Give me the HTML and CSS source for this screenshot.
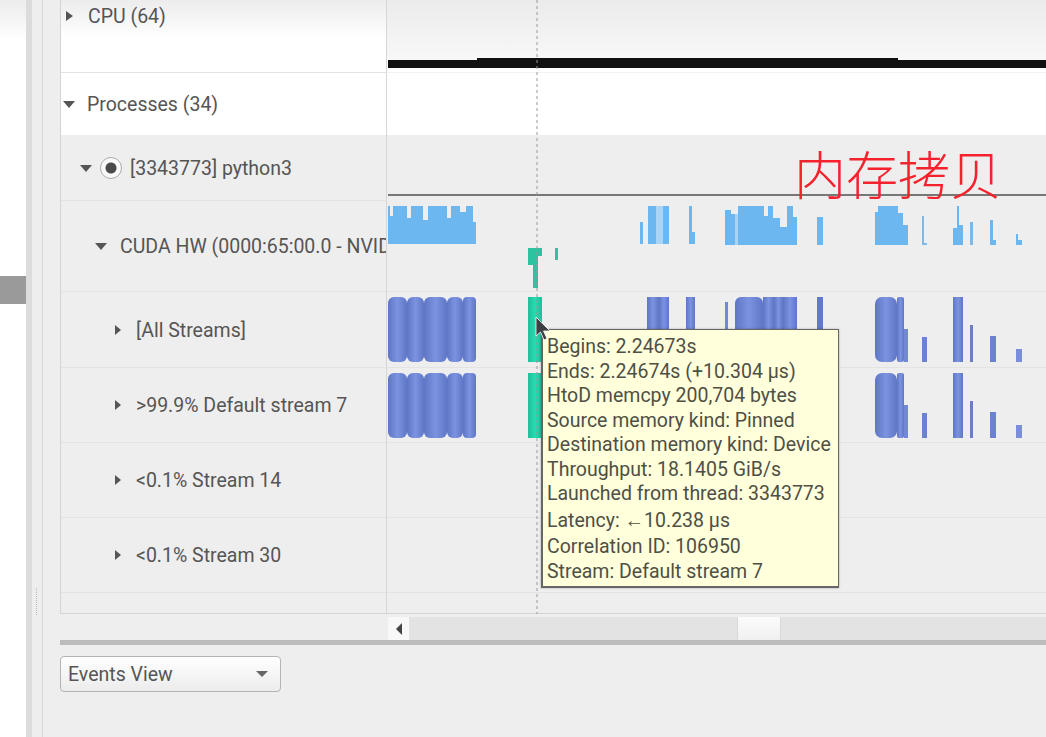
FILE: index.html
```html
<!DOCTYPE html>
<html lang="en">
<head>
    <meta charset="UTF-8">
    <meta name="viewport" content="width=device-width, initial-scale=1.0">
    <title>Timeline View</title>
    <link rel="stylesheet" href="styles.css">
</head>
<body>
    <div class="rail"><div class="rail-handle"></div></div>
    <div class="gutter"><div class="grip"></div></div>

    <div class="main">
        <div class="tree">
            <div class="row row-cpu">
                <div class="label level-0"><span class="caret-right"></span>CPU (64)</div>
                <div class="lane"></div>
            </div>
            <div class="row row-processes">
                <div class="label level-0"><span class="caret-down"></span>Processes (34)</div>
                <div class="lane"></div>
            </div>
            <div class="row row-process">
                <div class="label level-1"><span class="caret-down"></span><span class="radio"></span>[3343773] python3</div>
                <div class="lane lane-process"></div>
            </div>
            <div class="row row-device">
                <div class="label level-2"><span class="caret-down"></span>CUDA HW (0000:65:00.0 - NVIDIA A100)</div>
                <div class="lane"></div>
            </div>
            <div class="row row-stream-first">
                <div class="label level-3"><span class="caret-right"></span>[All Streams]</div>
                <div class="lane"></div>
            </div>
            <div class="row row-stream">
                <div class="label level-3"><span class="caret-right"></span>&gt;99.9% Default stream 7</div>
                <div class="lane"></div>
            </div>
            <div class="row row-stream">
                <div class="label level-3"><span class="caret-right"></span>&lt;0.1% Stream 14</div>
                <div class="lane"></div>
            </div>
            <div class="row row-stream">
                <div class="label level-3"><span class="caret-right"></span>&lt;0.1% Stream 30</div>
                <div class="lane"></div>
            </div>
            <div class="row row-end">
                <div class="label"></div>
                <div class="lane"></div>
            </div>

            <!-- timeline drawing, viewBox uses page coordinates -->
            <svg class="chart" viewBox="387 0 659 614" width="659" height="614">
                <defs>
                    <linearGradient id="capsule">
                        <stop offset="0" stop-color="#5f76c6"/>
                        <stop offset="0.5" stop-color="#7c93e0"/>
                        <stop offset="1" stop-color="#5f76c6"/>
                    </linearGradient>
                    <linearGradient id="teal">
                        <stop offset="0" stop-color="#22bd9b"/>
                        <stop offset="0.5" stop-color="#24dcb0"/>
                        <stop offset="1" stop-color="#22bd9b"/>
                    </linearGradient>
                    <g id="stream-bars" fill="url(#capsule)">
                        <rect x="388" y="297" width="19" height="65" rx="6"/>
                        <rect x="407" y="297" width="17" height="65" rx="6"/>
                        <rect x="424" y="297" width="23" height="65" rx="6"/>
                        <rect x="447" y="297" width="16" height="65" rx="6"/>
                        <rect x="463" y="297" width="13" height="65" rx="4"/>
                        <rect x="528" y="297" width="14" height="65" fill="url(#teal)"/>
                        <rect x="647" y="297" width="12" height="65"/>
                        <rect x="659" y="297" width="10" height="65"/>
                        <rect x="686" y="297" width="9" height="65"/>
                        <rect x="725" y="302" width="3" height="60" fill="#7188d4"/>
                        <rect x="735" y="297" width="28" height="65" rx="6"/>
                        <rect x="763" y="297" width="11" height="65"/>
                        <rect x="774" y="297" width="9" height="65"/>
                        <rect x="783" y="297" width="14" height="65"/>
                        <rect x="817" y="297" width="6" height="65" fill="#6179c8"/>
                        <rect x="875" y="297" width="22" height="65" rx="7"/>
                        <rect x="897" y="297" width="7" height="65" rx="2"/>
                        <rect x="904" y="329" width="4" height="33" fill="#7188d4"/>
                        <rect x="922" y="337" width="5" height="25" fill="#6b82d0"/>
                        <rect x="953" y="297" width="10" height="65"/>
                        <rect x="970" y="325" width="3" height="37" fill="#6b7fc0"/>
                        <rect x="990" y="336" width="6" height="26" fill="#6b82d0"/>
                        <rect x="1016" y="349" width="6" height="13" fill="#7a8fd8"/>
                    </g>
                </defs>

                <path class="cpu-load" d="M388 60H477V58H898V60H1046V68H388Z"/>

                <path class="hw-load" d="M388 244V206H390V216H393V206H407V218H411V206H423V220H428V206H447V218H451V206H460V212H466V206H473V222H476V244Z"/>
                <path class="hw-load" d="M640 244V222H643V244ZM648 244V206H656V244ZM663 244V206H669V244Z"/>
                <rect class="hw-pale" x="656" y="206" width="7" height="38"/>
                <path class="hw-load" d="M689 244V206H692V232H695V244Z"/>
                <path class="hw-load" d="M725 245V210H731V214H735V245ZM738 245V206H764V216H768V206H773V218H780V227H787V206H793V217H797V245Z"/>
                <rect class="hw-pale" x="735" y="214" width="3" height="31"/>
                <path class="hw-load" d="M817 245V217H823V245Z"/>
                <path class="hw-load" d="M875 245V212H878V206H898V213H903V225H908V245Z"/>
                <path class="hw-thin" d="M922 245V216H924V243H927V245Z"/>
                <path class="hw-load" d="M953 245V228H957V206H959V225H963V245Z"/>
                <path class="hw-thin" d="M970 245V222H973V245Z"/>
                <path class="hw-load" d="M990 245V220H993V240H996V245Z"/>
                <path class="hw-load" d="M1016 245V234H1018V240H1022V245Z"/>

                <path class="memcpy" d="M528 248H542V256H538V288H533V265H528Z"/>
                <rect class="memcpy" x="555" y="248" width="3" height="12"/>

                <use href="#stream-bars"/>
                <use href="#stream-bars" y="76"/>

                <line class="cursor-line" x1="537" y1="0" x2="537" y2="614"/>
            </svg>

            <div class="note">内存拷贝</div>
        </div>

        <div class="hscroll">
            <div class="hscroll-btn"><span class="caret-left"></span></div>
            <div class="hscroll-track hscroll-before"></div>
            <div class="hscroll-thumb"></div>
            <div class="hscroll-track"></div>
        </div>
        <div class="splitter"></div>

        <div class="view-select">
            <span>Events View</span>
            <span class="select-caret"></span>
        </div>
    </div>

    <div class="tooltip">
        <div>Begins: 2.24673s</div>
        <div>Ends: 2.24674s (+10.304 μs)</div>
        <div>HtoD memcpy 200,704 bytes</div>
        <div>Source memory kind: Pinned</div>
        <div>Destination memory kind: Device</div>
        <div>Throughput: 18.1405 GiB/s</div>
        <div>Launched from thread: 3343773</div>
        <div class="tooltip-gap">Latency: ←10.238 μs</div>
        <div class="tooltip-gap">Correlation ID: 106950</div>
        <div>Stream: Default stream 7</div>
    </div>

    <svg class="pointer" width="18" height="26" viewBox="0 0 18 26">
        <path d="M1 1V20L5.5 16L9 24L12 22.5L8.5 15H15Z" fill="#3c3f44" stroke="#fff" stroke-width="0.8"/>
    </svg>
</body>
</html>
```

FILE: styles.css
```css
* {
    box-sizing: border-box;
}

body {
    font-family: Roboto, 'Liberation Sans', sans-serif;
    margin: 0;
    height: 737px;
    overflow: hidden;
    display: flex;
    background-color: #eeeeee;
    color: #555;
    font-size: 19.5px;
}

.rail {
    width: 26px;
    background: linear-gradient(#ececec, #ffffff 40px);
    padding-top: 276px;
}

.rail-handle {
    height: 28px;
    background-color: #9a9a9a;
}

.gutter {
    width: 17px;
    border-left: 6px solid #dcdcdc;
    border-right: 1px solid #d8d8d8;
    padding-top: 588px;
}

.grip {
    width: 1px;
    height: 27px;
    margin-left: 4px;
    border-left: 1px dotted #bbb;
}

.main {
    flex: 1;
    min-width: 0;
    padding-left: 17px;
}

/* Tree and timeline rows */
.tree {
    position: relative;
    height: 614px;
    border-left: 1px solid #d4d4d4;
}

.row {
    display: flex;
}

.row-cpu { height: 73px; background: linear-gradient(#ececec, #ffffff 38px); }
.row-processes { height: 62px; background-color: #fff; }
.row-process { height: 66px; }
.row-device { height: 91px; }
.row-stream-first { height: 76px; }
.row-stream { height: 75px; }
.row-end { height: 21px; }

.row-cpu .label { padding-bottom: 40px; }
.row-process .label { padding-top: 1px; }
.row-stream-first .label { padding-top: 1px; }

.label {
    width: 326px;
    flex-shrink: 0;
    display: flex;
    align-items: center;
    white-space: nowrap;
    overflow: hidden;
    border-bottom: 1px solid #e3e3e3;
    border-right: 1px solid #d6d6d6;
}

.row-end .label, .row-end .lane {
    border-bottom: 1px solid #d4d4d4;
}

.row-processes .label { border-bottom: none; }

.level-0 { padding-left: 4px; }
.level-1 { padding-left: 19px; }
.level-2 { padding-left: 34px; }
.level-3 { padding-left: 54px; }

.lane {
    flex: 1;
    border-bottom: 1px solid #e3e3e3;
}

.row-cpu .lane {
    background: linear-gradient(#ebebeb, #f8f8f8 60px, #ffffff 68px);
    border-bottom: 1px solid #f2f2f2;
}

.row-processes .lane {
    border-bottom: none;
}

.lane-process {
    border-bottom: 2px solid #777;
    height: 61px;
    margin-left: 1px;
}

/* Carets */
.caret-right, .caret-down, .caret-left, .select-caret {
    display: inline-block;
    width: 0;
    height: 0;
    flex-shrink: 0;
}

.caret-right {
    border-left: 7px solid #555;
    border-top: 5px solid transparent;
    border-bottom: 5px solid transparent;
    margin-right: 15px;
    margin-left: 1px;
}

.level-3 .caret-right {
    border-left-width: 6px;
    margin-right: 15px;
    margin-left: 0;
}

.caret-down {
    border-top: 7px solid #555;
    border-left: 6px solid transparent;
    border-right: 6px solid transparent;
    margin-right: 13px;
}

.level-0 .caret-down {
    margin-left: -2px;
    margin-right: 12px;
}

.level-1 .caret-down {
    margin-right: 8px;
}

.caret-left {
    border-right: 6px solid #444;
    border-top: 6px solid transparent;
    border-bottom: 6px solid transparent;
}

.select-caret {
    border-top: 6px solid #666;
    border-left: 6px solid transparent;
    border-right: 6px solid transparent;
}

.radio {
    width: 22px;
    height: 22px;
    border-radius: 50%;
    border: 1px solid #aaa;
    background: radial-gradient(circle, #4a4a4a 0 5px, #fafafa 6px);
    margin-right: 8px;
    flex-shrink: 0;
}

/* Chart */
.chart {
    position: absolute;
    top: 0;
    left: 326px;
}

.cpu-load { fill: #111; }
.hw-load { fill: #6db7f0; }
.hw-pale { fill: #a9d4f5; }
.hw-thin { fill: #7db8e6; }
.memcpy { fill: #2cc4a0; }

.cursor-line {
    stroke: #999;
    stroke-width: 1;
    stroke-dasharray: 3 3;
}

.note {
    position: absolute;
    left: 733px;
    top: 143px;
    font-family: 'Noto Sans CJK SC', sans-serif;
    font-size: 52px;
    font-weight: 300;
    line-height: 60px;
    color: #f5222d;
    white-space: nowrap;
}

/* Scrollbar */
.hscroll {
    display: flex;
    height: 26px;
    padding: 3px 0 0 328px;
}

.hscroll-btn {
    width: 21px;
    background-color: #f8f8f8;
    display: flex;
    align-items: center;
    justify-content: center;
}

.hscroll-track {
    flex: 1;
    background-color: #e3e3e3;
}

.hscroll-before {
    flex: 0 0 328px;
}

.hscroll-thumb {
    width: 44px;
    background: linear-gradient(#fbfbfb, #f0f0f0);
    border-left: 1px solid #d8d8d8;
    border-right: 1px solid #d8d8d8;
}

.splitter {
    height: 5px;
    background-color: #bcbcbc;
}

/* Bottom drop-down */
.view-select {
    width: 221px;
    height: 36px;
    margin-top: 11px;
    padding: 0 12px 0 7px;
    display: flex;
    align-items: center;
    justify-content: space-between;
    border: 1px solid #b4b4b4;
    border-radius: 4px;
    background: linear-gradient(#ffffff, #ececec);
}

/* Tooltip */
.tooltip {
    position: absolute;
    left: 541px;
    top: 329px;
    width: 298px;
    height: 259px;
    padding: 5px 0 0 4px;
    background-color: #ffffdc;
    border: 1px solid #666;
    border-left-width: 2px;
    border-bottom-width: 2px;
    box-shadow: 0 0 2px rgba(0, 0, 0, 0.3);
    color: #4f4f45;
    font-size: 19.5px;
    line-height: 24.5px;
    white-space: nowrap;
}

.tooltip-gap {
    margin-top: 2px;
}

.pointer {
    position: absolute;
    left: 535px;
    top: 316px;
}
```
